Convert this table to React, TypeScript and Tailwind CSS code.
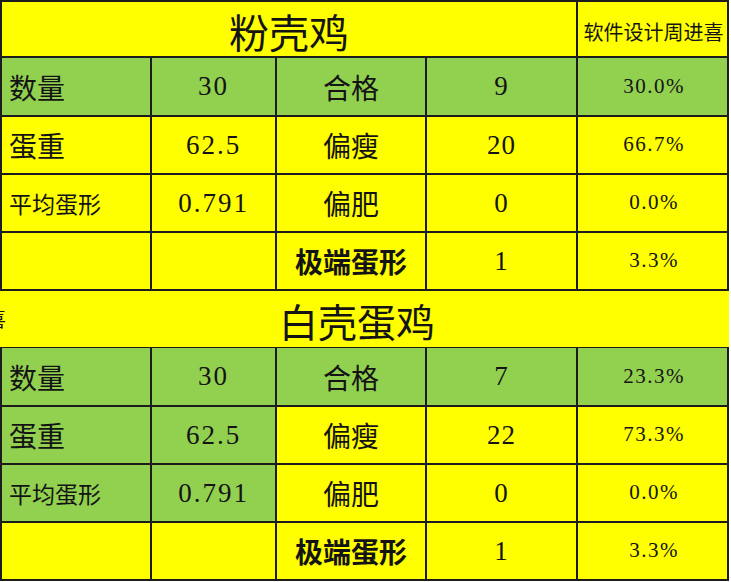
import type { ReactNode } from "react";

const YELLOW = "bg-[#ffff00]";
const GREEN = "bg-[#92d050]";

const cjk = "font-['Noto_Sans_CJK_SC',sans-serif]";
const num = "font-['Liberation_Serif','Noto_Sans_CJK_SC',serif]";

type Row = {
  label: string;
  labelSize?: string;
  value: string;
  kind: string;
  strong?: boolean;
  count: string;
  pct: string;
  bgs: string[];
  height: string;
};

const pinkRows: Row[] = [
  { label: "数量", value: "30", kind: "合格", count: "9", pct: "30.0%", bgs: [GREEN, GREEN, GREEN, GREEN, GREEN], height: "h-[59px]" },
  { label: "蛋重", value: "62.5", kind: "偏瘦", count: "20", pct: "66.7%", bgs: [YELLOW, YELLOW, YELLOW, YELLOW, YELLOW], height: "h-[58px]" },
  { label: "平均蛋形", labelSize: "text-[23px]", value: "0.791", kind: "偏肥", count: "0", pct: "0.0%", bgs: [YELLOW, YELLOW, YELLOW, YELLOW, YELLOW], height: "h-[58px]" },
  { label: "", value: "", kind: "极端蛋形", strong: true, count: "1", pct: "3.3%", bgs: [YELLOW, YELLOW, YELLOW, YELLOW, YELLOW], height: "h-[58px]" }
];

const whiteRows: Row[] = [
  { label: "数量", value: "30", kind: "合格", count: "7", pct: "23.3%", bgs: [GREEN, GREEN, GREEN, GREEN, GREEN], height: "h-[59px]" },
  { label: "蛋重", value: "62.5", kind: "偏瘦", count: "22", pct: "73.3%", bgs: [GREEN, GREEN, YELLOW, YELLOW, YELLOW], height: "h-[58px]" },
  { label: "平均蛋形", labelSize: "text-[23px]", value: "0.791", kind: "偏肥", count: "0", pct: "0.0%", bgs: [GREEN, GREEN, YELLOW, YELLOW, YELLOW], height: "h-[58px]" },
  { label: "", value: "", kind: "极端蛋形", strong: true, count: "1", pct: "3.3%", bgs: [YELLOW, YELLOW, YELLOW, YELLOW, YELLOW], height: "h-[58px]" }
];

function Cell({ bg, className, children }: { bg: string; className?: string; children?: ReactNode }) {
  return (
    <div className={`flex items-center border-r-2 border-b-2 border-[#1c1c1c] text-[#141414] ${bg} ${className ?? ""}`}>
      {children}
    </div>
  );
}

function DataRow({ row }: { row: Row }) {
  return (
    <>
      <Cell bg={row.bgs[0]} className={`${row.height} border-l-2 pl-[7px] ${cjk} ${row.labelSize ?? "text-[28px]"}`}>
        {row.label}
      </Cell>
      <Cell bg={row.bgs[1]} className={`justify-center ${num} text-[27px] tracking-[2px]`}>
        {row.value}
      </Cell>
      <Cell
        bg={row.bgs[2]}
        className={`justify-center ${cjk} text-[28px] ${row.strong ? "font-bold text-[#1d1d96]" : ""}`}
      >
        {row.kind}
      </Cell>
      <Cell bg={row.bgs[3]} className={`justify-center ${num} text-[27px] tracking-[1px]`}>
        {row.count}
      </Cell>
      <Cell bg={row.bgs[4]} className={`justify-center pl-[3px] ${num} text-[21px] tracking-[1.5px]`}>
        {row.pct}
      </Cell>
    </>
  );
}

export default function App() {
  return (
    <div className="h-[582px] w-[731px] overflow-hidden bg-white">
      <div className="grid w-[729px] grid-cols-[152px_125px_150px_151px_151px]">
        <Cell bg={YELLOW} className={`col-span-4 h-[58px] justify-center border-t-2 border-l-2 pt-[4px] leading-none ${cjk} text-[40px]`}>
          粉壳鸡
        </Cell>
        <Cell bg={YELLOW} className={`h-[58px] justify-center border-t-2 pt-[6px] pl-[2px] leading-none ${cjk} text-[20px]`}>
          软件设计周进喜
        </Cell>

        {pinkRows.map((row, i) => (
          <DataRow key={`p${i}`} row={row} />
        ))}

        <div className={`col-span-5 flex h-[57px] items-center overflow-hidden border-b border-[#1c1c1c] leading-none ${YELLOW} ${cjk} text-[#141414]`}>
          <span className="-ml-[14px] text-[20px]">喜</span>
          <span className="ml-[273px] pt-[2px] text-[39px]">白壳蛋鸡</span>
        </div>

        {whiteRows.map((row, i) => (
          <DataRow key={`w${i}`} row={row} />
        ))}
      </div>
    </div>
  );
}
